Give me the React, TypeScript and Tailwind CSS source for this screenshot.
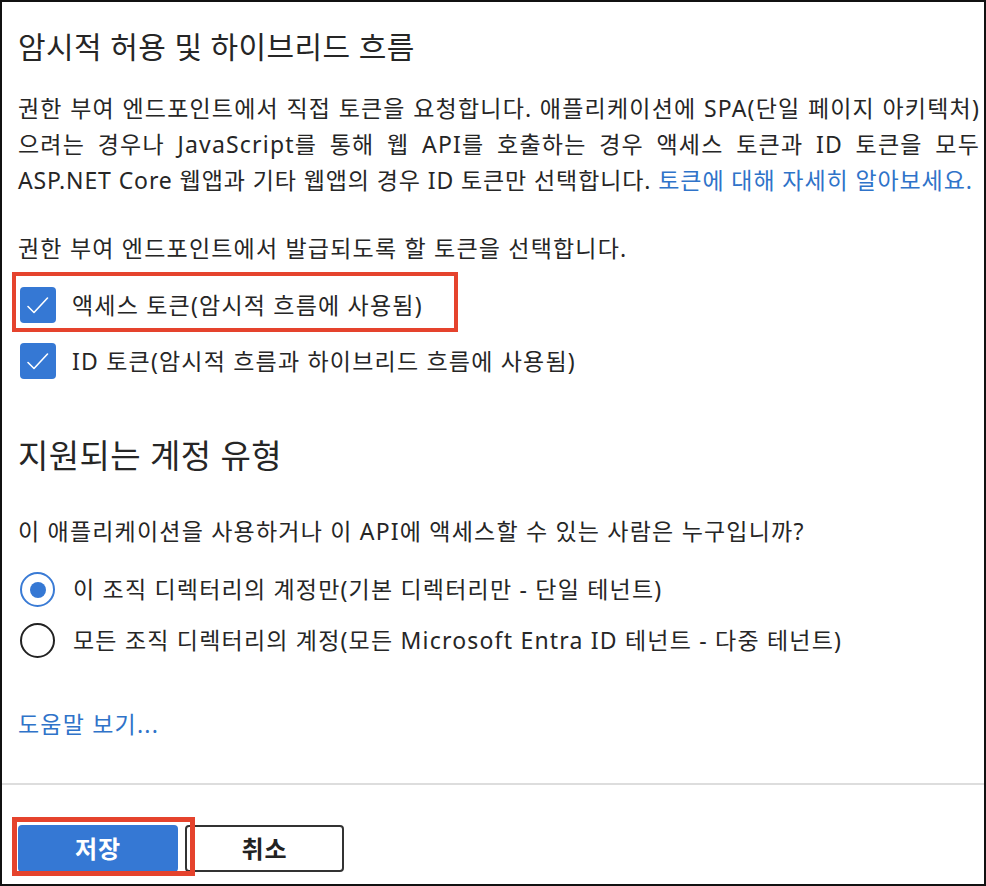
import React from "react";

const font = { fontFamily: '"Noto Sans", "Noto Sans CJK KR", sans-serif' };

function Check() {
  return (
    <div className="w-[36px] h-[36px] rounded-[4px] bg-[#3578d4] flex items-center justify-center shrink-0">
      <svg width="36" height="36" viewBox="0 0 36 36" fill="none">
        <path d="M8 19.5 L14 25.5 L27.5 11" stroke="white" strokeWidth="1.6" strokeLinecap="round" strokeLinejoin="round" />
      </svg>
    </div>
  );
}

export default function App() {
  return (
    <div className="relative w-[986px] h-[886px] bg-white" style={font}>
      <div className="w-[986px] h-[886px] border-2 border-[#111] bg-white overflow-hidden flex flex-col text-[#262626]">
        <div className="pl-[16px] pt-[25px]">
          <h1 className="text-[30px] leading-[40px] tracking-[0.4px] whitespace-nowrap">암시적 허용 및 하이브리드 흐름</h1>
          <div className="mt-[23px] text-[23px] leading-[36px] tracking-[1.2px] w-[962px]">
            <div className="whitespace-nowrap [text-align-last:justify]">
              권한 부여 엔드포인트에서 직접 토큰을 요청합니다. 애플리케이션에 SPA(단일 페이지 아키텍처)
            </div>
            <div className="whitespace-nowrap [text-align-last:justify]">
              으려는 경우나 JavaScript를 통해 웹 API를 호출하는 경우 액세스 토큰과 ID 토큰을 모두
            </div>
            <div className="whitespace-nowrap tracking-[0.9px]">
              ASP.NET Core 웹앱과 기타 웹앱의 경우 ID 토큰만 선택합니다.{" "}
              <span className="text-[#2f73c9]">토큰에 대해 자세히 알아보세요.</span>
            </div>
          </div>
          <div className="mt-[32px] text-[23px] leading-[36px] tracking-[1.2px] whitespace-nowrap">
            권한 부여 엔드포인트에서 발급되도록 할 토큰을 선택합니다.
          </div>
          <div className="mt-[21px] flex flex-col gap-[20px] pl-[2px] text-[23px] tracking-[1.2px]">
            <div className="flex items-center gap-[16px] h-[36px]">
              <Check />
              <span className="whitespace-nowrap">액세스 토큰(암시적 흐름에 사용됨)</span>
            </div>
            <div className="flex items-center gap-[16px] h-[36px]">
              <Check />
              <span className="whitespace-nowrap">ID 토큰(암시적 흐름과 하이브리드 흐름에 사용됨)</span>
            </div>
          </div>
          <h2 className="mt-[57px] text-[33px] leading-[40px] tracking-[0.4px] whitespace-nowrap">지원되는 계정 유형</h2>
          <div className="mt-[37px] text-[23px] leading-[36px] tracking-[1.2px] whitespace-nowrap">
            이 애플리케이션을 사용하거나 이 API에 액세스할 수 있는 사람은 누구입니까?
          </div>
          <div className="mt-[23px] flex flex-col gap-[16px] pl-[2px] text-[23px] tracking-[1.2px]">
            <div className="flex items-center gap-[18px] h-[35px]">
              <div className="w-[35px] h-[35px] rounded-full border-2 border-[#3a7bd5] flex items-center justify-center shrink-0">
                <div className="w-[16px] h-[16px] rounded-full bg-[#3578d4]" />
              </div>
              <span className="whitespace-nowrap">이 조직 디렉터리의 계정만(기본 디렉터리만 - 단일 테넌트)</span>
            </div>
            <div className="flex items-center gap-[18px] h-[35px]">
              <div className="w-[35px] h-[35px] rounded-full border-2 border-[#222] shrink-0" />
              <span className="whitespace-nowrap">모든 조직 디렉터리의 계정(모든 Microsoft Entra ID 테넌트 - 다중 테넌트)</span>
            </div>
          </div>
          <div className="mt-[48px] text-[23px] leading-[36px] tracking-[1.2px] text-[#2f73c9] whitespace-nowrap">도움말 보기...</div>
        </div>
        <div className="mt-[41px] border-t-2 border-[#dddddd]" />
        <div className="pl-[16px] pt-[40px] flex gap-[7px]">
          <button className="w-[160px] h-[47px] rounded-[4px] bg-[#3578d4] text-white text-[24px] tracking-[1px] font-bold">저장</button>
          <button className="w-[159px] h-[47px] rounded-[4px] border-2 border-[#333] bg-white text-[#222] text-[24px] tracking-[1px] font-bold">취소</button>
        </div>
      </div>
      <div className="absolute left-[12px] top-[272px] w-[446px] h-[60px] border-[4px] border-[#e5432d]" />
      <div className="absolute left-[12px] top-[817px] w-[183px] h-[59px] border-[5px] border-[#e5432d]" />
    </div>
  );
}
